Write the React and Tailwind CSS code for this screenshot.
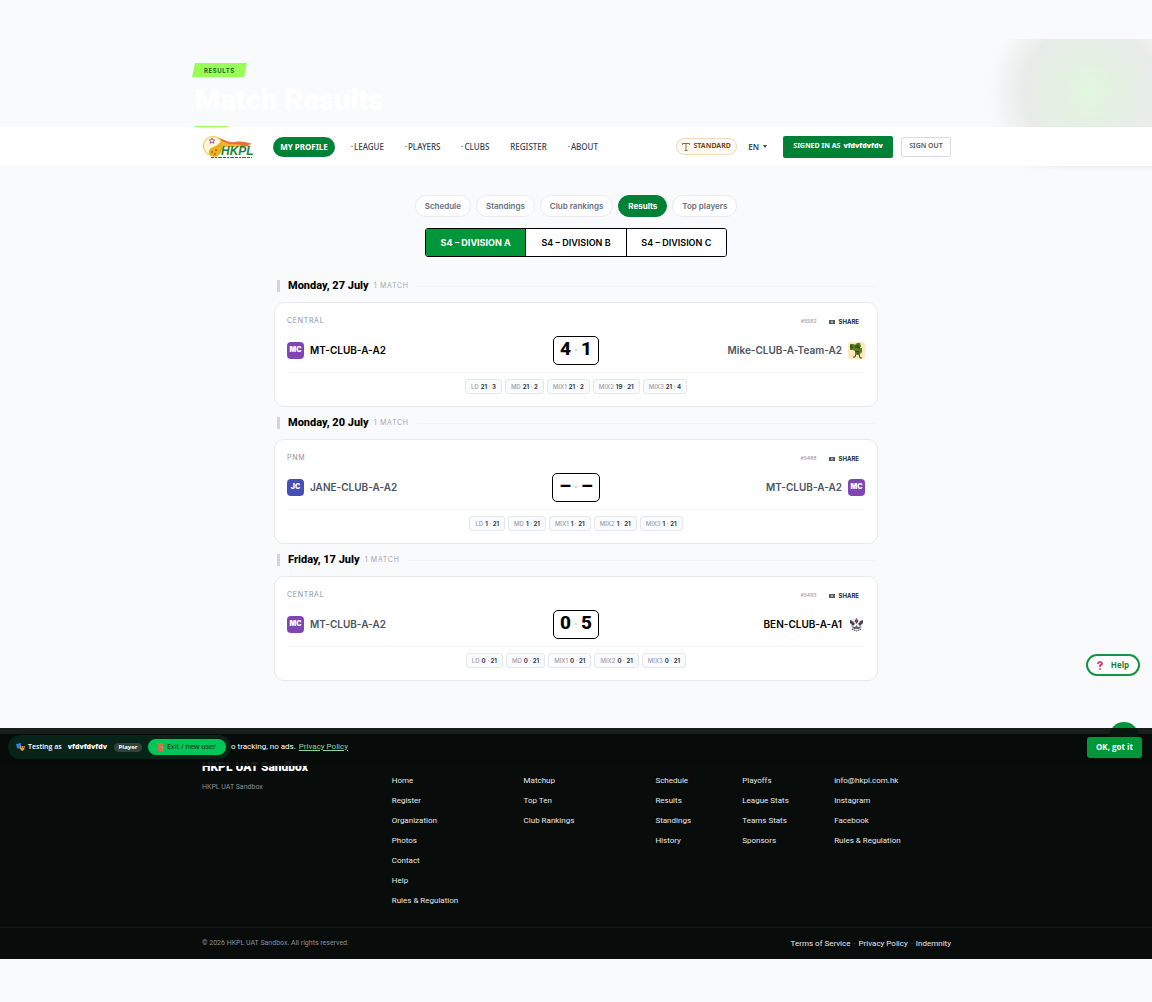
const navItems = ["LEAGUE", "PLAYERS", "CLUBS", "REGISTER", "ABOUT"];
const tabs = ["Schedule", "Standings", "Club rankings", "Results", "Top players"];
const divisions = ["S4 – DIVISION A", "S4 – DIVISION B", "S4 – DIVISION C"];

const matchDays = [
  {
    day: "Monday, 27 July",
    venue: "CENTRAL",
    id: "#5582",
    home: { name: "MT-CLUB-A-A2", badge: "MC", winner: true },
    away: { name: "Mike-CLUB-A-Team-A2", badge: "cactus" },
    score: ["4", "1"],
    games: [["LD", "21", "3"], ["MD", "21", "2"], ["MIX1", "21", "2"], ["MIX2", "19", "21"], ["MIX3", "21", "4"]],
  },
  {
    day: "Monday, 20 July",
    venue: "PNM",
    id: "#5488",
    home: { name: "JANE-CLUB-A-A2", badge: "JC" },
    away: { name: "MT-CLUB-A-A2", badge: "MC" },
    score: ["–", "–"],
    games: [["LD", "1", "21"], ["MD", "1", "21"], ["MIX1", "1", "21"], ["MIX2", "1", "21"], ["MIX3", "1", "21"]],
  },
  {
    day: "Friday, 17 July",
    venue: "CENTRAL",
    id: "#5493",
    home: { name: "MT-CLUB-A-A2", badge: "MC" },
    away: { name: "BEN-CLUB-A-A1", badge: "crest", winner: true },
    score: ["0", "5"],
    games: [["LD", "0", "21"], ["MD", "0", "21"], ["MIX1", "0", "21"], ["MIX2", "0", "21"], ["MIX3", "0", "21"]],
  },
];

const footerColumns = [
  ["Home", "Register", "Organization", "Photos", "Contact", "Help", "Rules & Regulation"],
  ["Matchup", "Top Ten", "Club Rankings"],
  ["Schedule", "Results", "Standings", "History"],
  ["Playoffs", "League Stats", "Teams Stats", "Sponsors"],
  ["info@hkpl.com.hk", "Instagram", "Facebook", "Rules & Regulation"],
];

const Logo = () => (
  <svg viewBox="0 0 52 24" className="h-6 w-[52px]" aria-label="HKPL">
    <path d="M14 2c8 1 12 6 20 5 6-1 12 0 17 2l-4 1 3 2-8-1H20L13 7z" fill="#ee7030" />
    <path d="M17 5c6 1 10 5 16 4l8 1-4 2H20z" fill="#f7b12c" />
    <circle cx="12" cy="11" r="9.500" fill="#fdf6d8" stroke="#f2c43c" strokeWidth="1" />
    <path d="M20 6c4 6 1 14-6 16-4 0-7-3-6-6 1-5 8-3 12-10z" fill="#e9b320" />
    <path d="m11 3 .8 1.900 2 .1-1.500 1.300.5 2L11 7.200l-1.800 1.100.5-2L8.200 5l2-.1z" fill="none" stroke="#84408c" strokeWidth=".8" />
    <circle cx="11" cy="17" r="1" fill="#a66b12" />
    <circle cx="15" cy="15" r="1" fill="#a66b12" />
    <circle cx="14" cy="19" r="1" fill="#a66b12" />
    <text x="20" y="20" fontFamily="Liberation Sans" fontSize="12" fontWeight="700" fontStyle="italic" fill="#168538">HKPL</text>
    <path d="M10 22.500h41" stroke="#168538" strokeWidth="1.200" strokeDasharray="3 1 2 1 4 1" />
  </svg>
);

const TeamBadge = ({ badge }) => {
  if (badge === "cactus") {
    return (
      <svg viewBox="0 0 17 17" className="size-[17px]" aria-hidden="true">
        <rect width="17" height="17" rx="3" fill="#fbe8bd" />
        <path d="M2 2h4l1 1 2-2h3l1 3-1 2h2v4l-2 2-2 1-3-1V9L5 8H2V5z" fill="#5a7d1d" />
        <path d="M3 3v3l2-1M8 3v3M10 3v3l2-1M7 9l2 1 2-1M9 12l2-1" fill="none" stroke="#1f390d" strokeWidth="1" />
        <path d="m8 12-1 3H5m6-3 1 4h2" fill="none" stroke="#3f3a12" strokeWidth="1" />
      </svg>
    );
  }
  if (badge === "crest") {
    return (
      <svg viewBox="0 0 17 17" className="size-[17px]" aria-hidden="true">
        <path d="M2 4l3 1 2 3-2 2-3-3zM15 4l-3 1-2 3 2 2 3-3zM8.500 2l2 3-2 3-2-3z" fill="#4b4450" />
        <path d="M3 10l4 1 1.500-2L10 11l4-1-3 3H6z" fill="#67616b" />
        <path d="M4 5l2 2M13 5l-2 2M8.500 3v2" stroke="#d93a72" strokeWidth="1" />
        <path d="M4 13l4.500 2L13 13" fill="none" stroke="#222" strokeDasharray="1.500 .7" />
      </svg>
    );
  }
  return (
    <span
      className={`flex size-[17px] items-center justify-center rounded text-[7px] font-black text-white ${
        badge === "JC" ? "bg-[#4450b5]" : "bg-[#8144b5]"
      }`}
    >
      {badge}
    </span>
  );
};

const Team = ({ team, away }) => (
  <div className={`flex flex-1 items-center gap-[6px] ${away ? "flex-row-reverse" : ""}`}>
    <TeamBadge badge={team.badge} />
    <span className={`text-[10px] font-semibold ${team.winner ? "text-black" : "text-[#4b5563]"}`}>
      {team.name}
    </span>
  </div>
);

const MatchDay = ({ match }) => (
  <section>
    <div className="flex h-8 items-center gap-2 px-[3px]">
      <span className="h-3 w-[3px] bg-[#d1d5db]" />
      <h2 className="font-[Roboto] text-[11px] font-extrabold text-black">{match.day}</h2>
      <span className="-ml-[3px] text-[7px] tracking-widest text-[#a3a8b0]">1 MATCH</span>
      <span className="h-px flex-1 bg-[#f3f4f6]" />
    </div>
    <article className="rounded-[10px] border border-[#e7e9ec] bg-white px-3 py-3">
      <div className="flex h-[13px] items-center">
        <span className="flex-1 text-[7px] tracking-widest text-[#8b919b]">{match.venue}</span>
        <span className="text-[5px] font-semibold text-[#a3a8b0]">{match.id}</span>
        <button className="mr-[6px] ml-3 flex items-center gap-1 text-[6px] font-bold text-[#1f2937]">
          <svg viewBox="0 0 6 5" className="h-[5px] w-[6px]" aria-hidden="true">
            <path d="M0 1h6v4H0z" fill="#555b63" />
            <circle cx="3" cy="3" r="1.200" fill="#a5a9af" />
          </svg>
          SHARE
        </button>
      </div>
      <div className="mt-2 flex h-[29px] items-center">
        <Team team={match.home} />
        <div className="flex h-[29px] items-center gap-1 rounded-[5px] border border-black px-[6px] pb-[2px] font-[Roboto] text-[19px] font-extrabold text-black">
          <span>{match.score[0]}</span>
          <span className="size-[2px] rounded-full bg-[#c4c8ce]" />
          <span>{match.score[1]}</span>
        </div>
        <Team team={match.away} away />
      </div>
      <div className="mt-[7px] flex justify-center gap-[3px] border-t border-[#f3f4f6] pt-[6px]">
        {match.games.map(([label, home, away]) => (
          <span
            key={label}
            className="flex h-[15px] items-center gap-[2px] rounded-[3px] border border-[#e5e7eb] bg-[#f9fafb] px-[5px] text-[6px] font-medium text-[#9ca3af]"
          >
            {label}
            <span className="flex items-center gap-[2px] font-bold text-[#374151]">
              {home}
              <span className="size-px bg-[#c4c8ce]" />
              {away}
            </span>
          </span>
        ))}
      </div>
    </article>
  </section>
);

const Hero = () => (
  <header className="relative mt-[39px] h-[88px] overflow-hidden">
    <div className="absolute inset-y-0 right-0 w-[162px] bg-[radial-gradient(circle_at_100px_53px,#e2f7df_0px,#e4f1e2_28px,#e8ece9_66px,#f9fafc_102px)]" />
    <div className="relative mx-auto max-w-[750px] pt-6">
      <p className="-ml-[9px] flex h-[14px] w-[55px] items-center justify-center bg-[#99ff55] text-[6px] font-semibold tracking-widest text-[#14532d] [clip-path:polygon(3px_0,100%_0,calc(100%-3px)_100%,0_100%)]">
        RESULTS
      </p>
      <h1 className="-ml-[6px] mt-[6px] font-[Roboto] text-[29px] leading-[34px] font-black text-white">Match Results</h1>
    </div>
    <span className="absolute bottom-0 left-1/2 -ml-[381px] h-px w-[33px] bg-[#99ff55]" />
  </header>
);

const NavBar = () => (
  <nav className="relative bg-white font-['Noto_Sans',sans-serif]">
    <div className="mx-auto flex h-[39px] max-w-[750px] items-center text-[8px] text-[#374151]">
      <a href="#" className="mr-5">
        <Logo />
      </a>
      <a href="#" className="mr-4 flex h-5 w-[62px] items-center justify-center rounded-full bg-[#008236] font-bold text-white">
        MY PROFILE
      </a>
      <div className="flex flex-1 items-center gap-[21px] font-medium">
        {navItems.map((item) => (
          <a key={item} href="#" className="flex items-center gap-px">
            {item !== "REGISTER" && <span className="h-px w-[2px] bg-[#9ca3af]" />}
            {item}
          </a>
        ))}
      </div>
      <button className="flex h-[17px] w-[61px] items-center justify-center gap-[3px] rounded-full border border-[#ead9bb] bg-[#fdfaf3] text-[7px] font-bold text-[#7c4a10]">
        <svg viewBox="0 0 8 8" className="size-2" fill="none" stroke="#7c4a10" strokeWidth=".8" aria-hidden="true">
          <path d="M.5 2V.5h7V2M4 .5v7M2.500 7.500h3" />
        </svg>
        STANDARD
      </button>
      <button className="mr-4 ml-[11px] flex items-center gap-1 font-semibold">
        EN
        <svg viewBox="0 0 4 3" className="h-[3px] w-1" aria-hidden="true">
          <path d="M0 0h4L2 3z" fill="#374151" />
        </svg>
      </button>
      <button className="mr-2 flex h-[22px] w-[110px] items-center justify-center gap-[3px] rounded-[2px] bg-[#008236] text-[7px] font-bold text-white">
        SIGNED IN AS <b className="font-black">vfdvfdvfdv</b>
      </button>
      <button className="h-5 w-[50px] rounded-[2px] border border-[#d8dbe0] text-[7px] font-semibold text-[#4b5563]">
        SIGN OUT
      </button>
    </div>
    <div className="absolute top-full right-0 h-[5px] w-[135px] bg-linear-to-b from-[#eceeed] to-[#f9fafc] [mask-image:linear-gradient(to_right,transparent,black_50px)]" />
  </nav>
);

const Overlays = () => (
  <div className="font-['Open_Sans',sans-serif]">
    <button className="absolute -top-[80px] right-3 flex h-[22px] w-[54px] items-center justify-center gap-2 rounded-full border-2 border-[#16943f] bg-white text-[8px] font-bold text-[#16803a]">
      <svg viewBox="0 0 6 9" className="h-[9px] w-[6px]" fill="none" stroke="#d92d52" strokeWidth="1.600" aria-hidden="true">
        <path d="M1 3V2l1-1h2l1 1v1L3 4.500V6M3 7.200v1.500" />
      </svg>
      Help
    </button>
    <span className="absolute -top-3 right-[13px] size-[30px] rounded-full bg-[#009639]" />
    <div className="absolute inset-x-0 -top-[6px] flex h-[38px] items-center justify-end bg-[#080c0b]/93 pr-[10px] pl-[231px]">
      <p className="flex-1 font-[Roboto] text-[8px] text-white">
        o tracking, no ads.{" "}
        <a href="#" className="ml-px text-[#86d9a0] underline">Privacy Policy</a>
      </p>
      <button className="h-[21px] w-[55px] rounded-[3px] bg-[#009639] text-[8px] font-bold text-white">OK, got it</button>
    </div>
    <div className="absolute top-px left-2 flex h-6 w-[223px] items-center rounded-full bg-[#082419] px-2 text-[7px] text-white">
      <svg viewBox="0 0 9 8" className="mr-[3px] h-2 w-[9px]" aria-hidden="true">
        <path d="M0 1l5-1v4L3 6 1 5z" fill="#3c7ddb" />
        <path d="M4 3h5L8 7 6 8 4 6z" fill="#d79c4a" />
        <path d="M5 4h1M7 4h1" stroke="#3a230c" />
      </svg>
      <span className="font-semibold">Testing as</span>
      <b className="ml-[6px] font-['Noto_Sans',sans-serif] font-black">vfdvfdvfdv</b>
      <span className="mr-[6px] ml-auto flex h-[9px] w-[28px] items-center justify-center rounded-full bg-[#30443b] text-[6px] font-bold">
        Player
      </span>
      <button className="-mr-[3px] flex h-4 w-[78px] items-center justify-center gap-1 rounded-full bg-[#00c758] font-['Noto_Sans',sans-serif] font-medium text-[#0a3a1c]">
        <svg viewBox="0 0 5 8" className="h-2 w-[5px]" aria-hidden="true">
          <path d="M0 0h5v8H0z" fill="#c9764c" />
          <circle cx="4" cy="4" r=".6" fill="#f9d06a" />
        </svg>
        Exit / new user
      </button>
    </div>
  </div>
);

const Footer = () => (
  <div className="relative mt-[53px]">
    <footer className="bg-[#080c0b] font-[Roboto] text-[8px] text-[#e5e7eb]">
      <div className="mx-auto grid h-[193px] max-w-[750px] grid-cols-[190fr_132fr_132fr_87fr_92fr_117fr] pt-[25px] pl-px">
        <div>
          <h2 className="text-[12px] leading-4 font-black text-white">HKPL UAT Sandbox</h2>
          <p className="mt-1 text-[7px] leading-4 text-[#8b9198]">HKPL UAT Sandbox</p>
        </div>
        {footerColumns.map((links) => (
          <ul key={links[0]} className="pt-3">
            {links.map((link) => (
              <li key={link} className="h-5 leading-5 whitespace-nowrap">
                <a href="#">{link}</a>
              </li>
            ))}
          </ul>
        ))}
      </div>
      <div className="border-t border-[#151a18]">
        <div className="mx-auto flex h-[31px] max-w-[750px] items-center gap-[3px] pl-px">
          <span className="flex-1 text-[7px] text-[#8b9198]">© 2026 HKPL UAT Sandbox. All rights reserved.</span>
          <a href="#">Terms of Service</a>
          <span className="text-[#4b5563]">·</span>
          <a href="#">Privacy Policy</a>
          <span className="text-[#4b5563]">·</span>
          <a href="#">Indemnity</a>
        </div>
      </div>
    </footer>
    <Overlays />
  </div>
);

export default function App() {
  return (
    <div className="flow-root min-h-screen bg-[#f9fafc] font-['Inter',sans-serif]">
      <Hero />
      <NavBar />
      <main className="mx-auto max-w-[604px] pt-[29px]">
        <div className="flex justify-center gap-[5px]">
          {tabs.map((tab) => (
            <button
              key={tab}
              className={`h-[22px] rounded-full border px-[9px] text-[8px] ${
                tab === "Results"
                  ? "border-[#008236] bg-[#008236] font-bold text-white"
                  : "border-[#e9ebef] bg-white font-semibold text-[#667080]"
              }`}
            >
              {tab}
            </button>
          ))}
        </div>
        <div className="mx-auto mt-[11px] mb-[13px] flex h-[29px] w-[302px] divide-x divide-black overflow-hidden rounded-[3px] border border-black">
          {divisions.map((division, index) => (
            <button
              key={division}
              className={`flex-1 text-[9px] ${index === 0 ? "bg-[#009639] font-bold text-white" : "bg-white font-semibold text-black"}`}
            >
              {division}
            </button>
          ))}
        </div>
        {matchDays.map((match) => (
          <MatchDay key={match.id} match={match} />
        ))}
      </main>
      <Footer />
    </div>
  );
}
